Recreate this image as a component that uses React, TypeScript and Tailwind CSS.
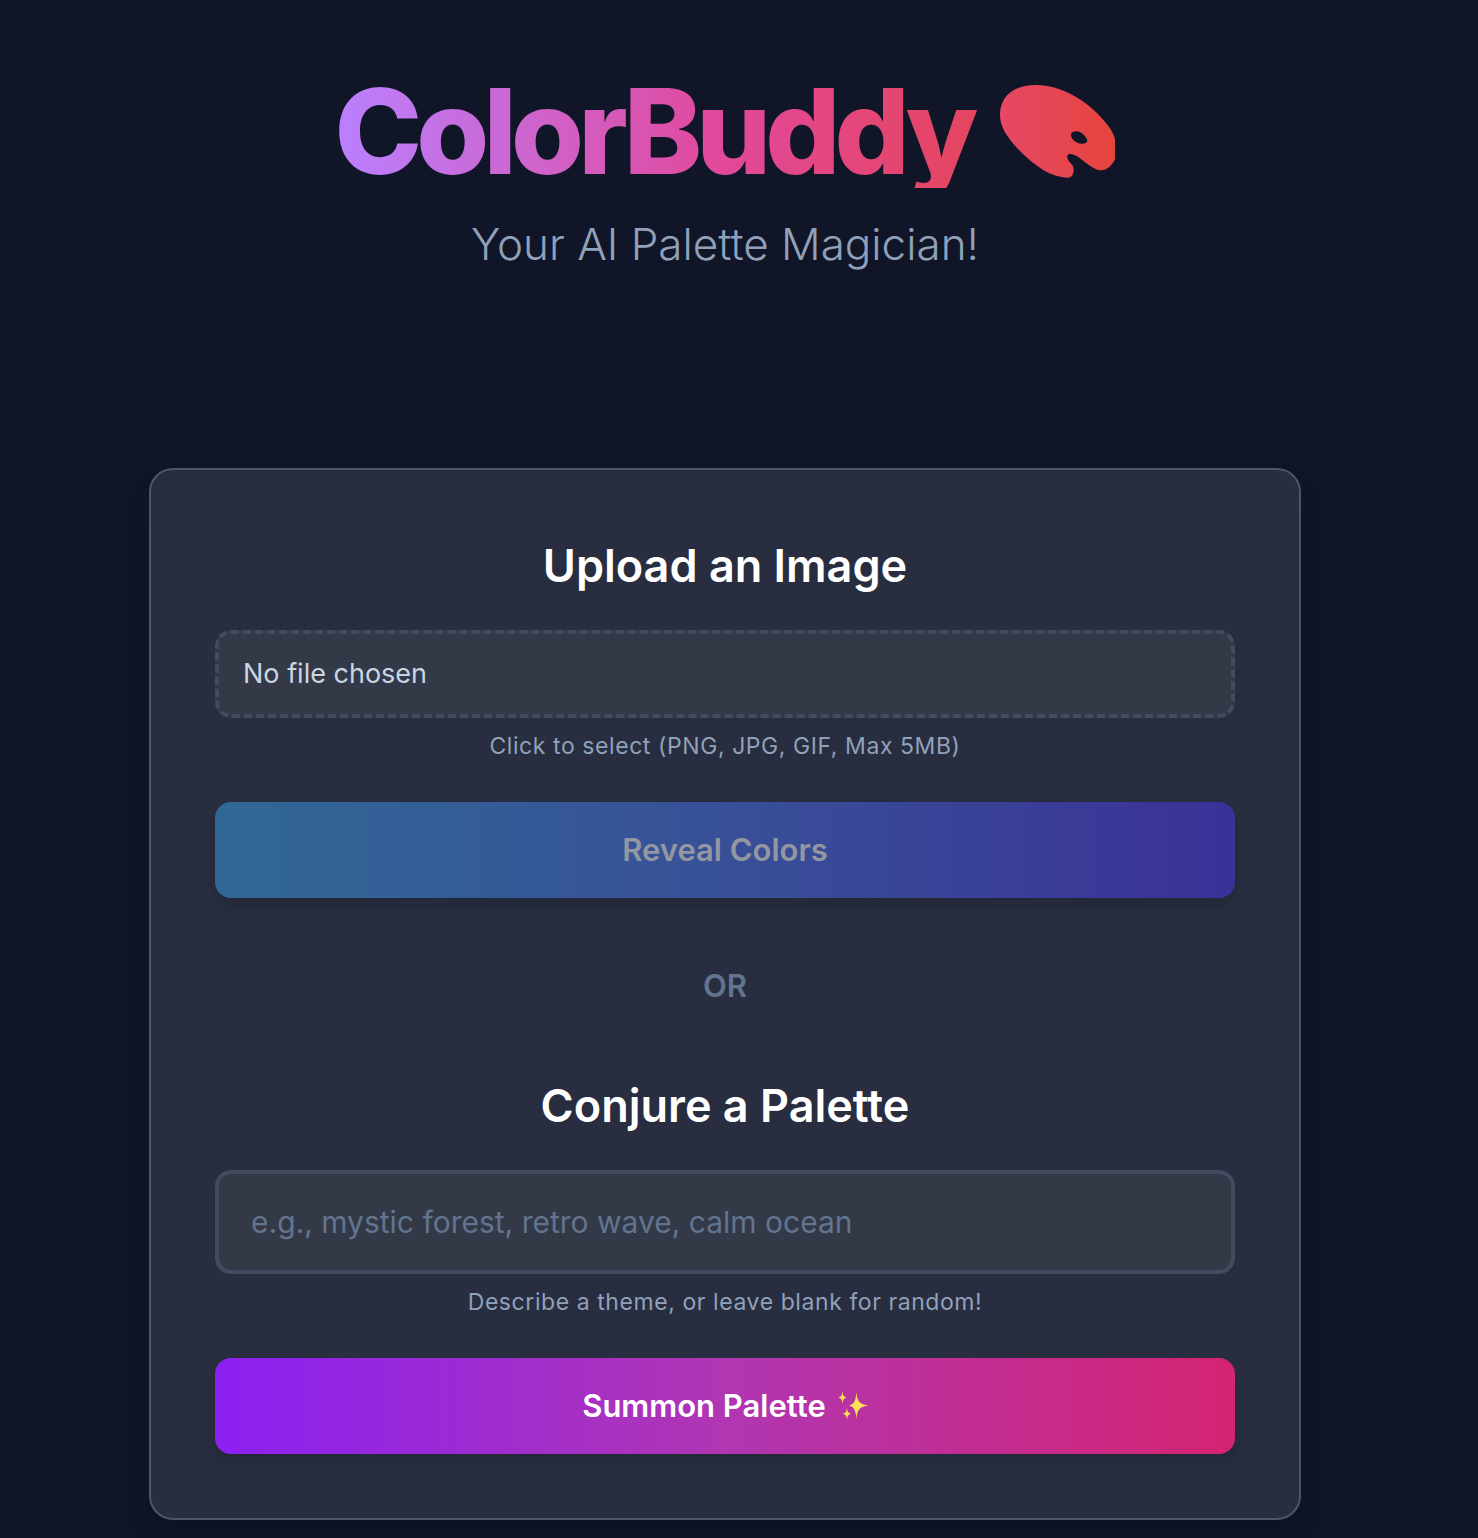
import { useState } from 'react';

function PaletteShape() {
  return (
    <svg viewBox="60 45 345 279" className="h-[93px] w-[115px] shrink-0" aria-hidden="true">
      <defs>
        <linearGradient id="palette-fill" x1="0" x2="1" y1="0" y2="0">
          <stop offset="0" stopColor="#e64866" />
          <stop offset="1" stopColor="#e6443c" />
        </linearGradient>
      </defs>
      <path
        fill="url(#palette-fill)"
        fillRule="evenodd"
        d="M60 135C60 82 98 45 168 45C262 45 350 115 392 178C400 192 403 200 405 208V268C398 283 382 301 365 301C330 301 300 252 270 252C263 252 261 256 262 263C264 277 281 280 281 299C281 313 275 323 262 323C215 323 165 290 115 238C80 200 60 170 60 135ZM273 195C273 187 282 184 290 184C305 185 319 200 322 212C322 218 314 221 306 221C290 221 273 208 273 195Z"
      />
    </svg>
  );
}

function Sparkles() {
  return (
    <svg viewBox="0 0 30 30" className="size-[30px]" aria-hidden="true">
      <g fill="#fde05a">
        <path d="M18.5 1C19.3 9.5 20.5 13 30 14.500C20.500 16 19.300 19.500 18.500 28C17.700 19.500 16.500 16 11 14.500C16.500 13 17.700 9.500 18.500 1Z" />
        <path d="M4.500 0C5 4.500 5.500 5.800 9 6.500C5.500 7.200 5 8.500 4.500 13C4 8.500 3.500 7.200 0 6.500C3.500 5.800 4 4.500 4.500 0Z" />
        <path d="M9 16.500C9.500 20.800 10 22 13.500 22.700C10 23.400 9.500 24.700 9 29C8.500 24.700 8 23.400 4.500 22.700C8 22 8.500 20.800 9 16.500Z" />
      </g>
    </svg>
  );
}

export default function App() {
  const [fileName, setFileName] = useState('');
  const [theme, setTheme] = useState('');

  return (
    <div className="flex min-h-screen flex-col items-center bg-[#101628] pt-17 pr-7 pb-4 font-['Inter',sans-serif] text-white">
      <header className="flex flex-col items-center">
        <h1 className="flex items-center gap-7 bg-linear-to-r/srgb from-[#ba80ff] via-[#e2489a] to-[#e6443c] bg-clip-text pt-1.5 text-[118px] leading-[114px] font-extrabold tracking-tighter text-transparent">
          ColorBuddy
          <PaletteShape />
        </h1>
        <p className="mt-6 text-[44px] leading-16 font-light text-slate-400">Your AI Palette Magician!</p>
      </header>

      <main className="mt-48 w-full max-w-[1152px] rounded-3xl border-2 border-[#4f5563] bg-[#282d3f] p-16 shadow-[0_16px_30px_-6px_rgba(0,0,0,0.2)]">
        <form className="flex flex-col" onSubmit={(e) => e.preventDefault()}>
          <h2 className="mb-8 text-center text-[45px] leading-16 font-semibold">Upload an Image</h2>
          <label className="flex h-22 cursor-pointer items-center rounded-2xl border-4 border-dashed border-[#414c61] bg-[#343948] px-6 text-[27px] text-slate-300 focus-within:border-slate-400">
            <input
              type="file"
              accept="image/png,image/jpeg,image/gif"
              aria-label="Upload an image"
              className="sr-only"
              onChange={(e) => setFileName(e.target.files?.[0]?.name ?? '')}
            />
            {fileName || 'No file chosen'}
          </label>
          <p className="mt-3 mb-10 text-center text-[23px] leading-8 tracking-wide text-slate-400">
            Click to select (PNG, JPG, GIF, Max 5MB)
          </p>
          <button
            type="submit"
            disabled={!fileName}
            className="h-24 rounded-2xl bg-linear-to-r/srgb from-[#306895] via-[#385098] to-[#3b3197] text-[31px] font-semibold text-[#9397a1] shadow-[0_8px_12px_rgba(0,0,0,0.1)]"
          >
            Reveal Colors
          </button>
        </form>

        <p className="my-16 text-center text-[31px] leading-12 font-semibold text-slate-500">OR</p>

        <form className="flex flex-col" onSubmit={(e) => e.preventDefault()}>
          <h2 className="mb-8 text-center text-[45px] leading-16 font-semibold">Conjure a Palette</h2>
          <input
            type="text"
            aria-label="Palette theme"
            value={theme}
            onChange={(e) => setTheme(e.target.value)}
            placeholder="e.g., mystic forest, retro wave, calm ocean"
            className="h-26 rounded-2xl border-4 border-[#414c61] bg-[#343948] px-8 text-[30px] text-slate-200 outline-none placeholder:text-slate-500 focus:border-slate-400"
          />
          <p className="mt-3 mb-10 text-center text-[23px] leading-8 tracking-wide text-slate-400">
            Describe a theme, or leave blank for random!
          </p>
          <button
            type="submit"
            className="flex h-24 items-center justify-center gap-3 rounded-2xl bg-linear-to-r/srgb from-[#8b20f2] via-[#b036b2] to-[#d42472] text-[31px] font-semibold shadow-[0_8px_12px_rgba(0,0,0,0.1)]"
          >
            Summon Palette
            <Sparkles />
          </button>
        </form>
      </main>
    </div>
  );
}
